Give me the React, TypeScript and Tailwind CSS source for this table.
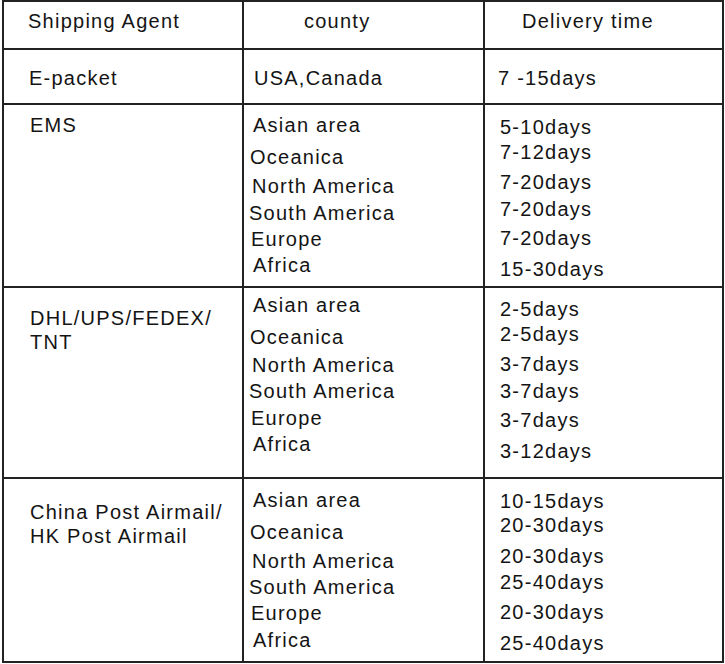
import React from "react";

type Line = { text: string; cls: string };

function Lines({ items }: { items: Line[] }) {
  return (
    <>
      {items.map((it, i) => (
        <div key={i} className={`whitespace-pre ${it.cls}`}>
          {it.text}
        </div>
      ))}
    </>
  );
}

const emsCountries: Line[] = [
  { text: "Asian area", cls: "ml-[4px]" },
  { text: "Oceanica", cls: "mt-[10px] ml-[1px]" },
  { text: "North America", cls: "mt-[7px] ml-[3px]" },
  { text: "South America", cls: "mt-[5px]" },
  { text: "Europe", cls: "mt-[4px] ml-[2px]" },
  { text: "Africa", cls: "mt-[4px] ml-[4px]" },
];

const emsTimes: Line[] = [
  { text: "5-10days", cls: "" },
  { text: "7-12days", cls: "mt-[3px]" },
  { text: "7-20days", cls: "mt-[8px]" },
  { text: "7-20days", cls: "mt-[5px]" },
  { text: "7-20days", cls: "mt-[7px]" },
  { text: "15-30days", cls: "mt-[9px]" },
];

const dhlCountries: Line[] = [
  { text: "Asian area", cls: "ml-[4px]" },
  { text: "Oceanica", cls: "mt-[10px] ml-[1px]" },
  { text: "North America", cls: "mt-[6px] ml-[3px]" },
  { text: "South America", cls: "mt-[4px]" },
  { text: "Europe", cls: "mt-[5px] ml-[2px]" },
  { text: "Africa", cls: "mt-[4px] ml-[4px]" },
];

const dhlTimes: Line[] = [
  { text: "2-5days", cls: "" },
  { text: "2-5days", cls: "mt-[3px]" },
  { text: "3-7days", cls: "mt-[8px]" },
  { text: "3-7days", cls: "mt-[5px]" },
  { text: "3-7days", cls: "mt-[7px]" },
  { text: "3-12days", cls: "mt-[9px]" },
];

const chinaCountries: Line[] = [
  { text: "Asian area", cls: "ml-[4px]" },
  { text: "Oceanica", cls: "mt-[10px] ml-[1px]" },
  { text: "North America", cls: "mt-[7px] ml-[3px]" },
  { text: "South America", cls: "mt-[4px]" },
  { text: "Europe", cls: "mt-[4px] ml-[2px]" },
  { text: "Africa", cls: "mt-[5px] ml-[4px]" },
];

const chinaTimes: Line[] = [
  { text: "10-15days", cls: "" },
  { text: "20-30days", cls: "mt-[2px]" },
  { text: "20-30days", cls: "mt-[9px]" },
  { text: "25-40days", cls: "mt-[4px]" },
  { text: "20-30days", cls: "mt-[8px]" },
  { text: "25-40days", cls: "mt-[9px]" },
];

export default function App() {
  return (
    <div className="w-[725px] h-[664px] bg-white overflow-hidden font-['Liberation_Sans',Arial,sans-serif] text-[20px] leading-[22px] tracking-[1.25px] text-[#141414]">
      <div className="ml-[2px] w-[722px] h-[663px] border-2 border-[#222] flex flex-col">
        {/* header */}
        <div className="h-[48px] border-b-2 border-[#222] flex">
          <div className="w-[240px] border-r-2 border-[#222] pl-[24px] pt-[8px]">Shipping Agent</div>
          <div className="w-[241px] border-r-2 border-[#222] pl-[60px] pt-[8px]">county</div>
          <div className="flex-1 pl-[37px] pt-[8px]">Delivery time</div>
        </div>
        {/* e-packet */}
        <div className="h-[55px] border-b-2 border-[#222] flex">
          <div className="w-[240px] border-r-2 border-[#222] pl-[25px] pt-[17px]">E-packet</div>
          <div className="w-[241px] border-r-2 border-[#222] pl-[10px] pt-[17px]">USA,Canada</div>
          <div className="flex-1 pl-[13px] pt-[17px] whitespace-pre">7 -15days</div>
        </div>
        {/* EMS */}
        <div className="h-[183px] border-b-2 border-[#222] flex">
          <div className="w-[240px] border-r-2 border-[#222] pl-[26px] pt-[9px]">EMS</div>
          <div className="w-[241px] border-r-2 border-[#222] pl-[5px] pt-[9px]">
            <Lines items={emsCountries} />
          </div>
          <div className="flex-1 pl-[15px] pt-[11px]">
            <Lines items={emsTimes} />
          </div>
        </div>
        {/* DHL */}
        <div className="h-[191px] border-b-2 border-[#222] flex">
          <div className="w-[240px] border-r-2 border-[#222] pl-[26px] pt-[18px] leading-[24px]">
            <div>DHL/UPS/FEDEX/</div>
            <div>TNT</div>
          </div>
          <div className="w-[241px] border-r-2 border-[#222] pl-[5px] pt-[6px]">
            <Lines items={dhlCountries} />
          </div>
          <div className="flex-1 pl-[15px] pt-[10px]">
            <Lines items={dhlTimes} />
          </div>
        </div>
        {/* China Post */}
        <div className="flex-1 flex">
          <div className="w-[240px] border-r-2 border-[#222] pl-[26px] pt-[21px] leading-[24px]">
            <div>China Post Airmail/</div>
            <div>HK Post Airmail</div>
          </div>
          <div className="w-[241px] border-r-2 border-[#222] pl-[5px] pt-[10px]">
            <Lines items={chinaCountries} />
          </div>
          <div className="flex-1 pl-[15px] pt-[11px]">
            <Lines items={chinaTimes} />
          </div>
        </div>
      </div>
    </div>
  );
}
